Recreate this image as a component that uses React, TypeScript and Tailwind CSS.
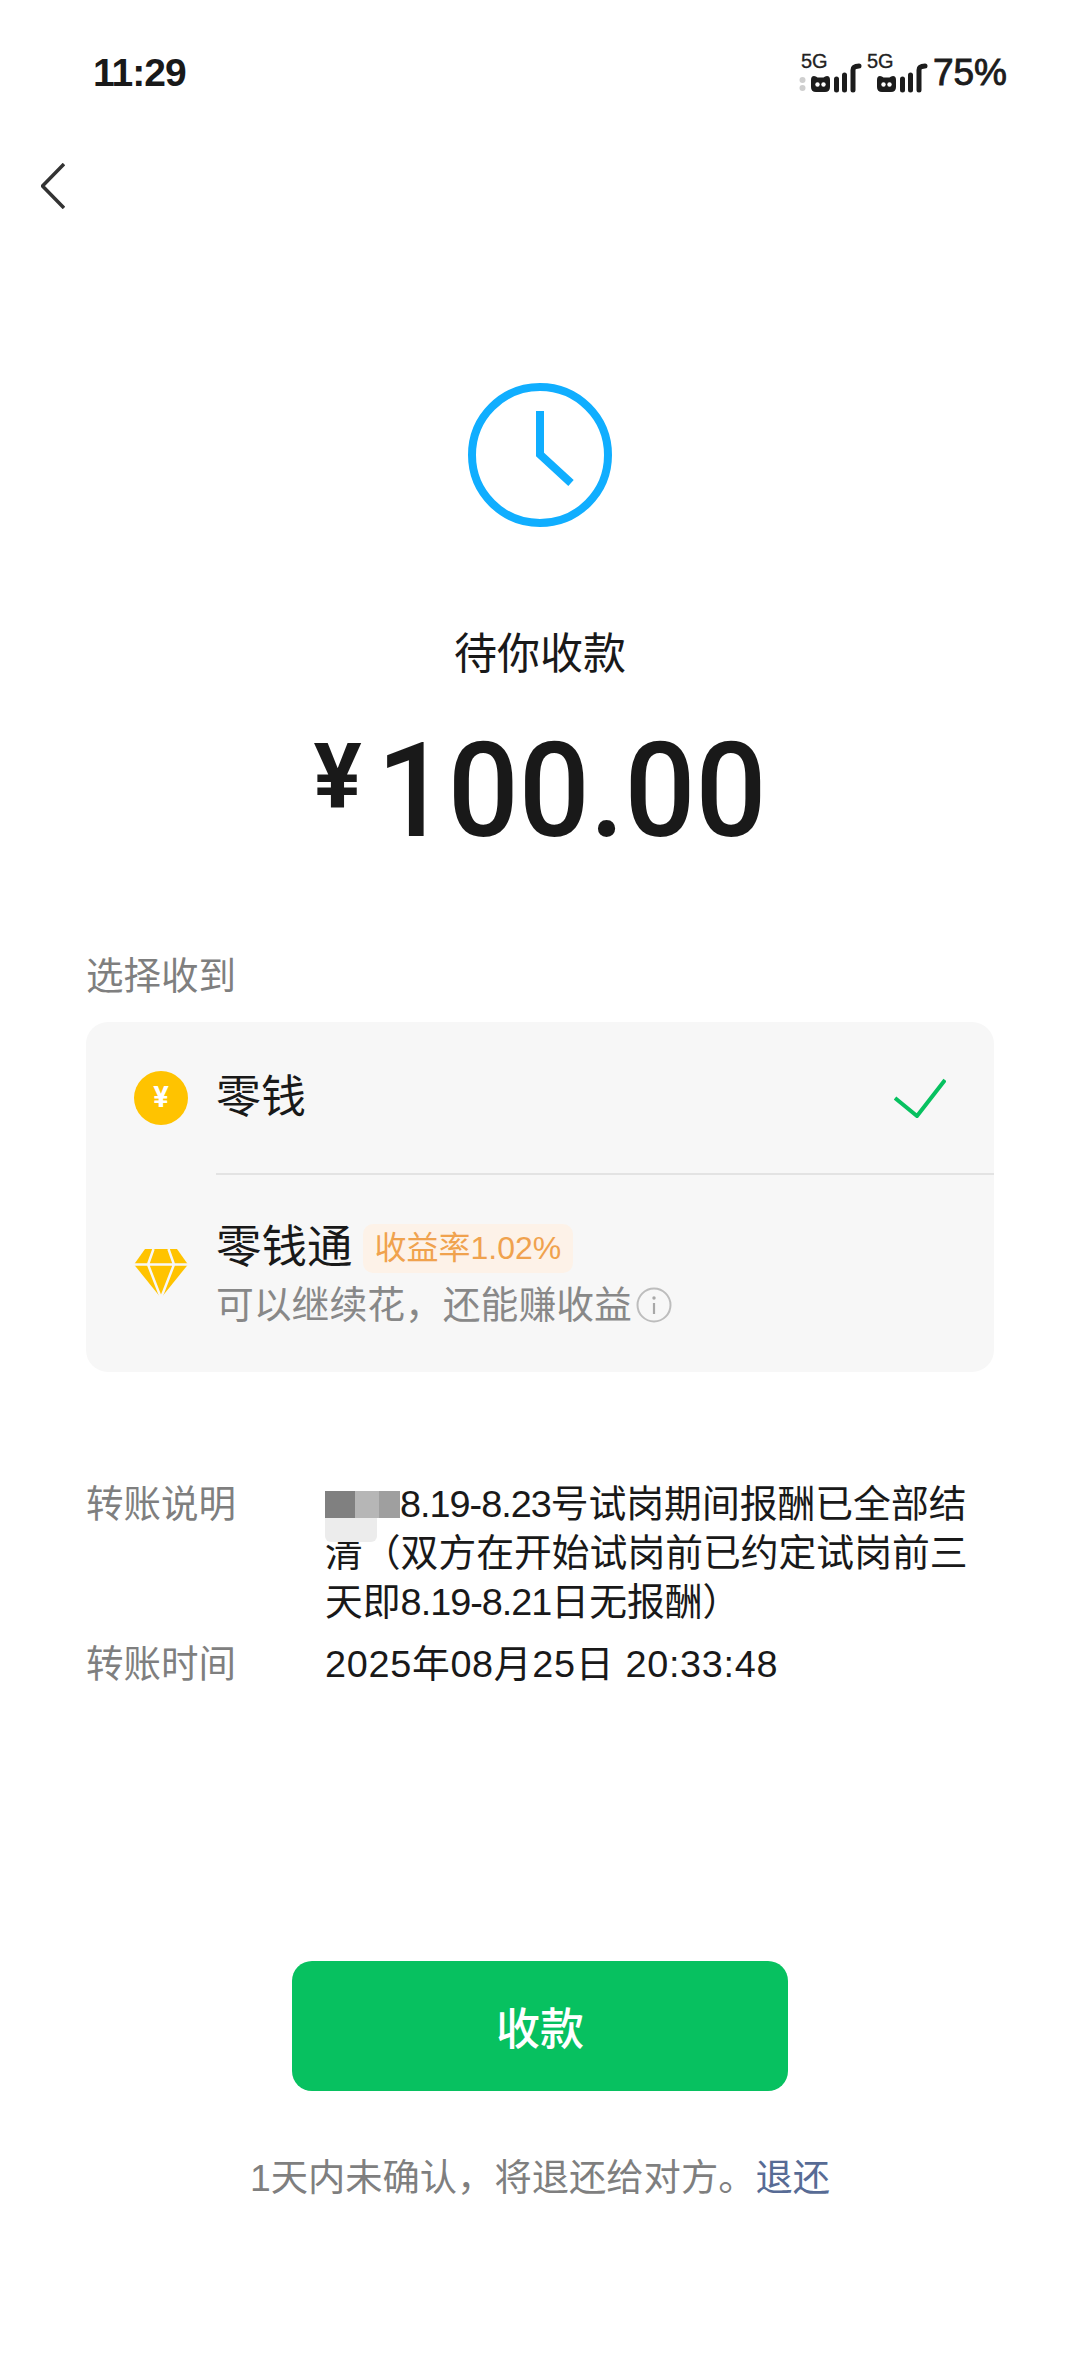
import React from 'react';

function SignalIcon({ showDots }: { showDots?: boolean }) {
  return (
    <div className="relative h-[38px] w-[66px]">
      <span className="absolute left-[2px] top-[-4px] text-[20px] leading-[20px] [-webkit-text-stroke:0.3px_#222] text-[#222] font-['Liberation_Sans',sans-serif]">
        5G
      </span>
      <svg viewBox="0 0 66 38" className="absolute left-0 top-0 h-[38px] w-[66px]">
        {showDots && (
          <g fill="#cfcfcf">
            <circle cx="3.5" cy="25" r="3" />
            <circle cx="3.5" cy="33" r="3" />
          </g>
        )}
        <path
          d="M15 21q2 0 3.500 1.500h6q1.500-1.500 3.500-1.500q3 0 3 4v7q0 5-5 5h-9q-5 0-5-5v-7q0-4 3-4z"
          fill="#1c1c1c"
        />
        <circle cx="18.500" cy="29.500" r="2.200" fill="#fff" />
        <circle cx="24.500" cy="29.500" r="2.200" fill="#fff" />
        <g stroke="#1c1c1c" strokeWidth="5" strokeLinecap="round" fill="none">
          <path d="M37.500 24V35" />
          <path d="M45.500 20V35" />
          <path d="M54 35V15Q54 11 60 11" />
        </g>
      </svg>
    </div>
  );
}

function ClockIcon() {
  return (
    <svg viewBox="0 0 144 144" className="h-[144px] w-[144px]">
      <circle cx="72" cy="72" r="68" fill="none" stroke="#10aeff" strokeWidth="8" />
      <path d="M72 28V71.500L103 100" fill="none" stroke="#10aeff" strokeWidth="8" />
    </svg>
  );
}

function DiamondIcon() {
  return (
    <svg viewBox="0 0 54 49" className="h-[49px] w-[54px]">
      <path d="M11 0H43L54 15.500L27 49L0 15.500Z" fill="#ffc300" />
      <path
        d="M0 15.500H54M19.500 0L14 15.500L27 49M34.500 0L40 15.500L27 49"
        fill="none"
        stroke="#f7f7f7"
        strokeWidth="2.500"
      />
    </svg>
  );
}

function InfoIcon() {
  return (
    <svg viewBox="0 0 36 36" className="h-[36px] w-[36px] shrink-0">
      <circle cx="18" cy="18" r="16.500" fill="none" stroke="#bdbdbd" strokeWidth="2" />
      <circle cx="18" cy="11" r="1.700" fill="#a8a8a8" />
      <path d="M18 16V27" stroke="#a8a8a8" strokeWidth="2.200" />
    </svg>
  );
}

export default function App() {
  return (
    <div className="h-[2373px] w-[1080px] overflow-hidden bg-white font-['Liberation_Sans','Noto_Sans_CJK_SC',sans-serif] text-[#191919]">
      {/* status bar */}
      <div className="flex h-[146px] items-start justify-between pl-[93px] pr-[73px] pt-[50px]">
        <span className="text-[39px] leading-[46px] font-bold tracking-[-1px]">11:29</span>
        <div className="flex items-start">
          <div className="mt-[5px] flex">
            <SignalIcon showDots />
            <SignalIcon />
          </div>
          <span className="ml-[2px] mt-[1px] text-[37px] leading-[44px] text-[#1c1c1c] [-webkit-text-stroke:0.9px_#1c1c1c]">
            75%
          </span>
        </div>
      </div>

      {/* back */}
      <div className="h-[237px] pl-[41px] pt-[17px]">
        <svg viewBox="0 0 24 46" className="h-[46px] w-[24px]">
          <path d="M23 1L1.500 23L23 45" fill="none" stroke="#333" strokeWidth="3.500" />
        </svg>
      </div>

      <div className="flex flex-col items-center">
        <ClockIcon />
        <div className="mt-[93px] text-[43px] leading-[60px] font-['Noto_Sans_CJK_SC',sans-serif]">待你收款</div>
        <div className="mt-[40px] flex h-[140px] items-start font-['Roboto',sans-serif] font-medium">
          <span className="mr-[15px] mt-[3px] text-[90px] leading-[110px] font-bold">¥</span>
          <span className="mt-[2px] scale-y-[1.05] text-[125px] leading-[140px]">100.00</span>
        </div>
      </div>

      <div className="px-[86px]">
        <div className="mt-[91px] text-[37.5px] leading-[50px] text-[#7f7f7f]">选择收到</div>

        {/* receive options */}
        <div className="mt-[21px] h-[350px] rounded-[22px] bg-[#f7f7f7]">
          <div className="flex h-[151px] items-center pl-[48px] pr-[48px]">
            <div className="flex h-[54px] w-[54px] items-center justify-center rounded-full bg-[#ffc300] text-[29px] leading-none font-bold text-white font-['Roboto',sans-serif]">
              ¥
            </div>
            <span className="ml-[28px] flex-1 text-[45px] leading-[60px]">零钱</span>
            <svg viewBox="0 0 52 40" className="h-[40px] w-[52px]">
              <path d="M1 20L23 38L51 2" fill="none" stroke="#07c160" strokeWidth="4" />
            </svg>
          </div>
          <div className="ml-[130px] h-[2px] bg-[#e3e3e3]" />
          <div className="flex h-[197px] items-start pl-[48px]">
            <div className="mt-[74px]">
              <DiamondIcon />
            </div>
            <div className="ml-[28px] mt-[48px]">
              <div className="flex h-[50px] items-center">
                <span className="text-[45.5px] leading-[50px]">零钱通</span>
                <span className="ml-[10px] flex h-[49px] items-center rounded-[10px] bg-[#fdf2e8] px-[12px] text-[32px] leading-none text-[#f0a24e]">
                  收益率1.02%
                </span>
              </div>
              <div className="mt-[8px] flex items-center text-[37.8px] leading-[48px] text-[#888]">
                可以继续花，还能赚收益
                <span className="ml-[4px] flex">
                  <InfoIcon />
                </span>
              </div>
            </div>
          </div>
        </div>

        {/* transfer details */}
        <div className="mt-[108px] flex">
          <div className="w-[239px] shrink-0 text-[37.5px] leading-[49px] text-[#7f7f7f]">转账说明</div>
          <div className="w-[650px] text-[37.8px] leading-[49px]">
            <span className="relative inline-block h-[27px] w-[75px] align-[-2px]">
              <span className="absolute left-0 top-[-1px] flex h-[27px] w-[75px]">
                <span className="w-[30px] bg-[#808080]" />
                <span className="w-[24px] bg-[#b6b6b6]" />
                <span className="w-[21px] bg-[#9f9f9f]" />
              </span>
              <span className="absolute left-0 top-[26px] z-10 h-[24px] w-[52px] rounded-b-[6px] bg-[#ececec]" />
            </span>
            <span className="tracking-[-1px]">8.19-8.23</span>号试岗期间报酬已全部结清（双方在开始试岗前已约定试岗前三天即<span className="tracking-[-1px]">8.19-8.21</span>日无报酬）
          </div>
        </div>
        <div className="mt-[13px] flex">
          <div className="w-[239px] shrink-0 text-[37.5px] leading-[49px] text-[#7f7f7f]">转账时间</div>
          <div className="text-[37.8px] leading-[49px] tracking-[0.7px]">2025年08月25日 20:33:48</div>
        </div>

        {/* action */}
        <button className="mx-auto mt-[272px] flex h-[130px] w-[496px] items-center justify-center rounded-[20px] bg-[#07c160] text-[44px] font-medium text-white font-['Noto_Sans_CJK_SC',sans-serif]">
          收款
        </button>
        <div className="mt-[62px] text-center text-[37.3px] leading-[50px] text-[#7f7f7f]">
          1天内未确认，将退还给对方。<span className="text-[#576b95]">退还</span>
        </div>
      </div>
    </div>
  );
}
